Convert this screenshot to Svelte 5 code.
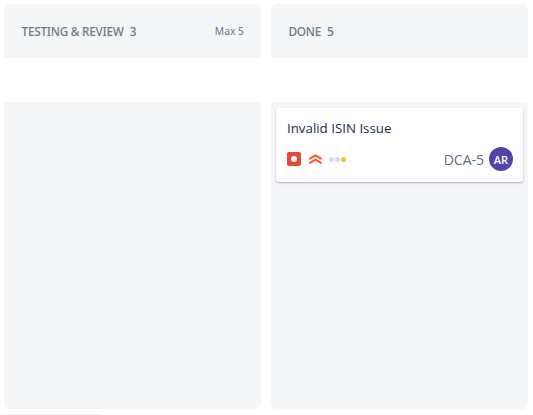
<script lang="ts">
  const columns = [
    { name: "TESTING & REVIEW", count: 3, max: 5, cards: [] },
    {
      name: "DONE",
      count: 5,
      max: null,
      cards: [{ title: "Invalid ISIN Issue", key: "DCA-5", initials: "AR" }],
    },
  ];
</script>

<div class="board">
  <div class="row heads">
    {#each columns as col}
      <div class="head">
        <span class="name">{col.name}</span>
        <span class="count">{col.count}</span>
        {#if col.max}
          <span class="max">Max {col.max}</span>
        {/if}
      </div>
    {/each}
  </div>

  <div class="row bodies">
    {#each columns as col}
      <div class="body">
        {#each col.cards as card}
          <div class="card">
            <div class="title">{card.title}</div>
            <div class="meta">
              <svg class="type" width="14" height="14" viewBox="0 0 14 14">
                <rect width="14" height="14" rx="2" fill="#e5493a" />
                <circle cx="7" cy="7" r="3" fill="#fff" />
              </svg>
              <svg class="prio" width="15" height="12" viewBox="0 0 15 12">
                <path d="M2 5.6 7.5 2.4l5.5 3.2M2 9.8l5.5-3.2 5.5 3.2" fill="none" stroke="#ff5630" stroke-width="2" stroke-linecap="round" stroke-linejoin="round" />
              </svg>
              <span class="dots">
                <i></i><i></i><i class="on"></i>
              </span>
              <span class="key">{card.key}</span>
              <span class="avatar">{card.initials}</span>
            </div>
          </div>
        {/each}
      </div>
    {/each}
  </div>
  <div class="scroll"></div>
</div>

<style>
  :global(body) {
    background: #fff;
    overflow: hidden;
  }
  .board {
    width: 533px;
    height: 415px;
    position: relative;
    box-sizing: border-box;
    padding: 4px 5px 0 4px;
    font-family: "Open Sans", "Noto Sans", sans-serif;
    color: #172b4d;
  }
  .row {
    display: grid;
    grid-template-columns: 257px 257px;
    gap: 10px;
  }
  .head {
    height: 54px;
    background: #f4f5f7;
    border-radius: 6px 6px 0 0;
    box-sizing: border-box;
    padding: 0 17px 0 17.5px;
    display: flex;
    align-items: center;
    color: #6b778c;
    font-family: "Noto Sans", "Open Sans", sans-serif;
    font-size: 11.8px;
    font-weight: 500;
  }
  .name {
    letter-spacing: -0.25px;
  }
  .count {
    margin-left: 6px;
  }
  .max {
    margin-left: auto;
    font-size: 10.3px;
    font-weight: 400;
  }
  .bodies {
    margin-top: 44px;
  }
  .body {
    height: 307px;
    background: #f4f5f7;
    border-radius: 4px 4px 6px 6px;
    box-sizing: border-box;
    padding: 6px 5px;
  }
  .card {
    height: 74px;
    background: #fff;
    border-radius: 3px;
    box-shadow: 0 1px 2px rgba(9, 30, 66, 0.3);
    box-sizing: border-box;
    padding: 11px 10px 0 11px;
  }
  .title {
    font-size: 13.3px;
    line-height: 18px;
    color: #172b4d;
  }
  .meta {
    display: flex;
    align-items: center;
    margin-top: 10px;
    height: 24px;
  }
  .prio {
    margin-left: 7px;
  }
  .dots {
    display: flex;
    gap: 1px;
    margin-left: 6px;
  }
  .dots i {
    width: 5px;
    height: 5px;
    border-radius: 50%;
    background: #d9d9de;
  }
  .dots i.on {
    background: #f5c13d;
  }
  .key {
    margin-left: auto;
    font-size: 14px;
    color: #5e6c84;
  }
  .avatar {
    width: 24px;
    height: 24px;
    border-radius: 50%;
    margin-left: 5px;
    background: #5243aa;
    color: #fff;
    font-size: 11px;
    font-weight: 600;
    display: flex;
    align-items: center;
    justify-content: center;
  }
  .scroll {
    position: absolute;
    left: 0;
    bottom: 0;
    width: 100px;
    height: 1px;
    background: #f1f2f4;
  }
</style>
